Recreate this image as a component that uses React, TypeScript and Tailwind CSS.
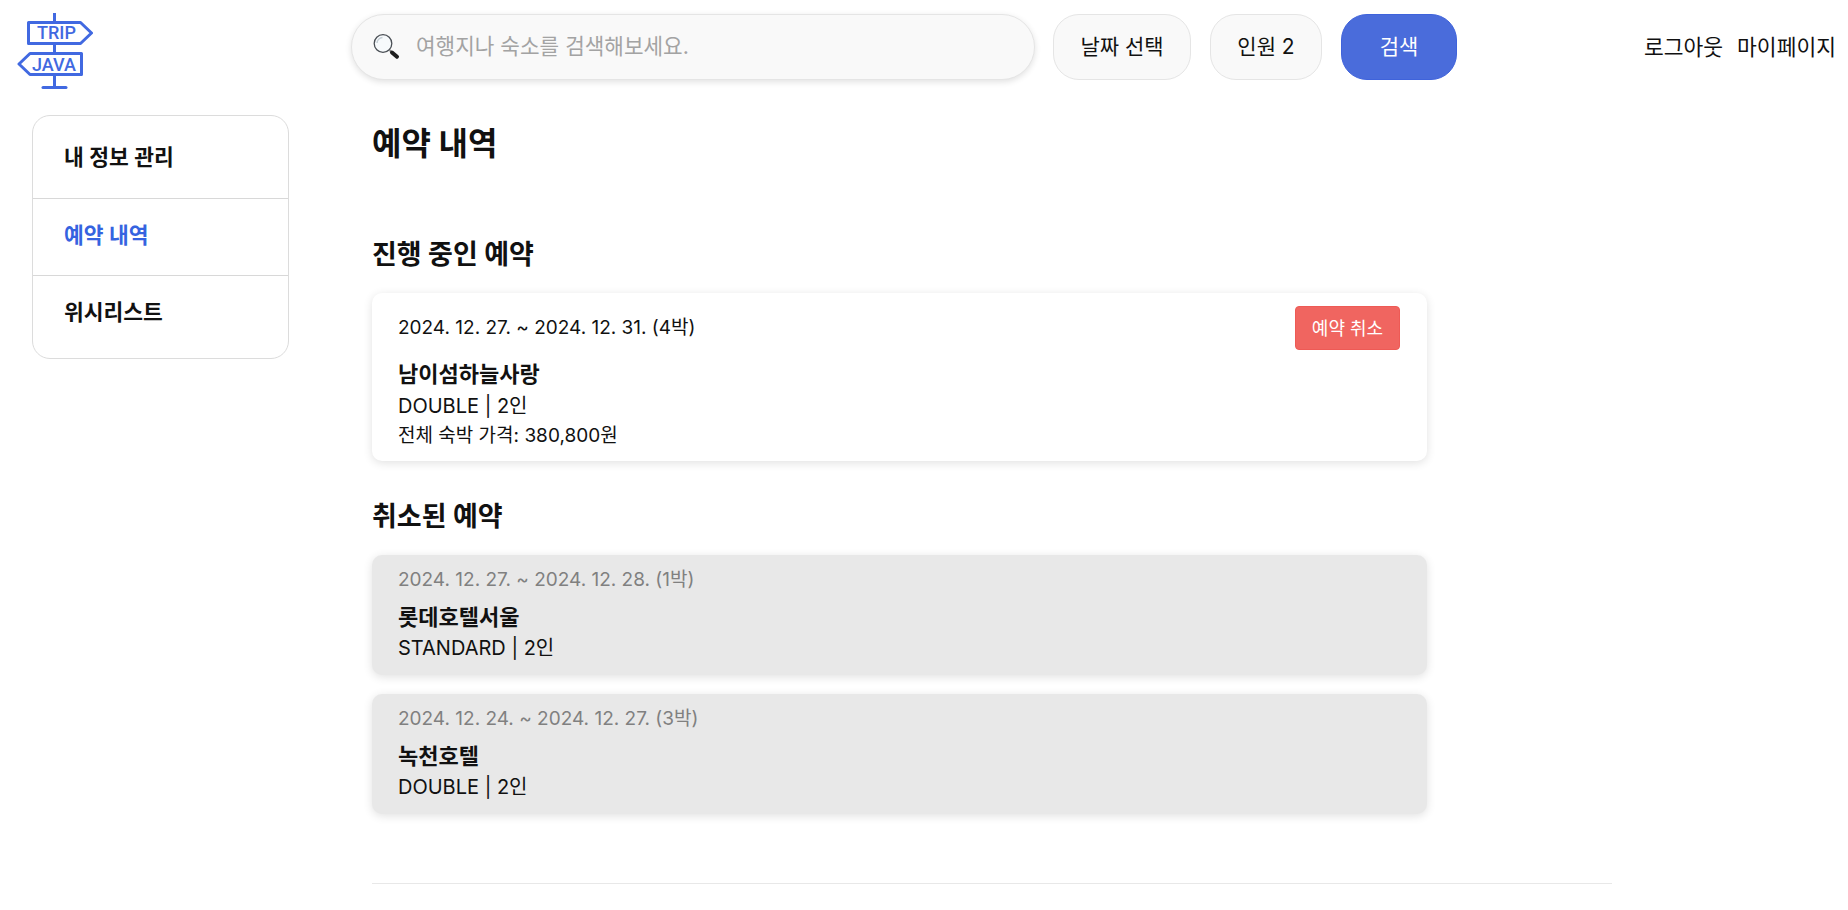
const font = { fontFamily: '"Inter", "Noto Sans CJK KR", sans-serif' };

function Logo() {
  return (
    <svg width="76" height="78" viewBox="0 0 76 78" fill="none" className="shrink-0 mt-[8px]">
      <path d="M37.500 1v10M37.500 31v11M37.500 62v13" stroke="#4169e1" strokeWidth="3" />
      <path d="M26 75.500h23" stroke="#4169e1" strokeWidth="3" strokeLinecap="round" />
      <path d="M11.500 10.500h52l11 10.500-11 10.500h-52z" fill="#fff" stroke="#4169e1" strokeWidth="3" strokeLinejoin="round" />
      <path d="M64.500 41.500H13L2 52l11 10.500h51.500z" fill="#fff" stroke="#4169e1" strokeWidth="3" strokeLinejoin="round" />
      <text x="39.500" y="27" textAnchor="middle" fontSize="18" fontWeight="500" fill="#4169e1" fontFamily="Roboto, sans-serif">TRIP</text>
      <text x="37" y="58.500" textAnchor="middle" fontSize="18" fontWeight="500" fill="#4169e1" fontFamily="Roboto, sans-serif">JAVA</text>
    </svg>
  );
}

function SearchGlyph() {
  return (
    <svg width="28" height="28" viewBox="0 0 28 28" fill="none" className="shrink-0">
      <circle cx="11" cy="10.500" r="8.800" fill="#f7fafc" stroke="#4a4f55" strokeWidth="1.300" />
      <path d="M5 10a6 6 0 0 1 5.500-5.500" stroke="#c5ced5" strokeWidth="1.500" />
      <path d="M17.500 17l2 2" stroke="#888" strokeWidth="1.800" />
      <path d="M20 19.500l5 4.300" stroke="#1f1f1f" strokeWidth="4" strokeLinecap="round" />
    </svg>
  );
}

function Active() {
  return (
    <div className="bg-white rounded-[10px] shadow-[0_2px_10px_rgba(0,0,0,0.12)] h-[168px] pl-[26px] pr-[27px] pt-[13px]">
      <div className="flex items-start justify-between">
        <p className="text-[19px] leading-[44px] text-[#111]">2024. 12. 27. ~ 2024. 12. 31. (4박)</p>
        <button className="w-[105px] h-[44px] bg-[#f06560] border border-[#ee5a55] rounded-[4px] text-white text-[18px]">예약 취소</button>
      </div>
      <p className="text-[22px] font-bold leading-[30px] mt-[9px] text-[#111]">남이섬하늘사랑</p>
      <p className="text-[20px] leading-[32px] mt-[1px] text-[#111]">DOUBLE | 2인</p>
      <p className="text-[19px] leading-[26px] mt-[1px] text-[#111]">전체 숙박 가격: 380,800원</p>
    </div>
  );
}

function Canceled({ date, name, room }: { date: string; name: string; room: string }) {
  return (
    <div className="bg-[#e8e8e8] rounded-[10px] shadow-[0_2px_10px_rgba(0,0,0,0.12)] h-[120px] px-[26px] pt-[8px]">
      <p className="text-[19px] leading-[34px] text-[#808080]">{date}</p>
      <p className="text-[22px] font-bold leading-[30px] mt-[5px] text-[#111]">{name}</p>
      <p className="text-[20px] leading-[32px] text-[#111]">{room}</p>
    </div>
  );
}

export default function App() {
  return (
    <div style={font} className="bg-white h-[910px] overflow-hidden text-[#111]">
      <header className="flex items-center h-[94px] pl-[17px] pr-[12px]">
        <Logo />
        <div className="ml-[258px] w-[684px] h-[66px] flex items-center pl-[20px] rounded-[33px] bg-[#f9f9f9] border border-[#e5e5e5] shadow-[0_2px_6px_rgba(0,0,0,0.12)]">
          <SearchGlyph />
          <span className="ml-[16px] text-[21.300px] text-[#a3a3a3]">여행지나 숙소를 검색해보세요.</span>
        </div>
        <button className="ml-[18px] w-[138px] h-[66px] rounded-[26px] bg-[#f9f9f9] border border-[#e5e5e5] text-[21px]">날짜 선택</button>
        <button className="ml-[19px] w-[112px] h-[66px] rounded-[26px] bg-[#f9f9f9] border border-[#e5e5e5] text-[21px]">인원 2</button>
        <button className="ml-[19px] w-[116px] h-[66px] rounded-[26px] bg-[#4a6cdb] border border-[#3f63db] text-white text-[21px]">검색</button>
        <nav className="ml-auto flex gap-[14px] text-[21.500px]">
          <span>로그아웃</span>
          <span>마이페이지</span>
        </nav>
      </header>
      <div className="flex pl-[32px] pt-[21px]">
        <aside className="w-[257px] h-[244px] shrink-0 rounded-[18px] border border-[#dcdcdc] flex flex-col text-[21.500px] font-semibold">
          <div className="h-[83px] flex items-center pl-[31px] border-b border-[#d8d8d8]">내 정보 관리</div>
          <div className="h-[77px] flex items-center pl-[31px] pb-[3px] border-b border-[#d8d8d8] text-[#3563e0]">예약 내역</div>
          <div className="flex-1 flex items-center pl-[31px] pb-[9px]">위시리스트</div>
        </aside>
        <main className="ml-[83px] w-[1240px]">
          <div className="w-[1055px]">
            <h1 className="text-[32px] font-bold leading-[40px] mt-[9px]">예약 내역</h1>
            <h2 className="text-[27px] font-bold leading-[32px] mt-[75px]">진행 중인 예약</h2>
            <div className="mt-[22px]"><Active /></div>
            <h2 className="text-[27px] font-bold leading-[32px] mt-[40px]">취소된 예약</h2>
            <div className="mt-[22px] flex flex-col gap-[19px]">
              <Canceled date="2024. 12. 27. ~ 2024. 12. 28. (1박)" name="롯데호텔서울" room="STANDARD | 2인" />
              <Canceled date="2024. 12. 24. ~ 2024. 12. 27. (3박)" name="녹천호텔" room="DOUBLE | 2인" />
            </div>
          </div>
          <div className="mt-[69px] border-t border-[#e8e8e8]" />
        </main>
      </div>
    </div>
  );
}
